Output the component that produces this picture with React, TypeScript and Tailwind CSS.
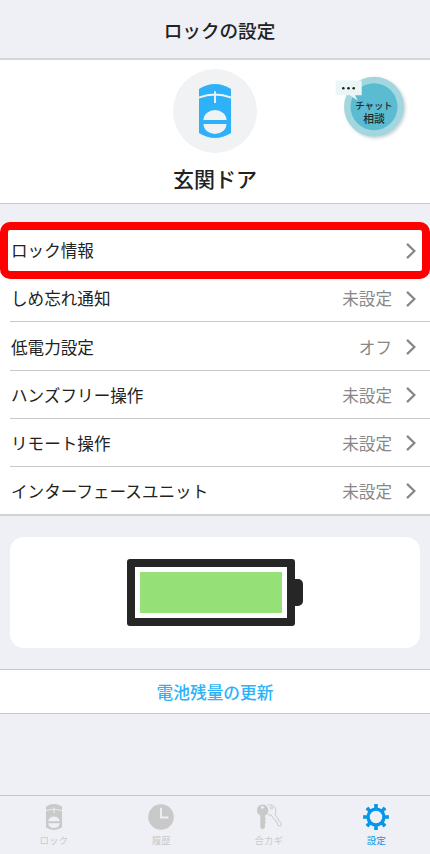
import React from 'react';

type Row = {
  label: string;
  value?: string;
};

const rows: Row[] = [
  { label: 'ロック情報' },
  { label: 'しめ忘れ通知', value: '未設定' },
  { label: '低電力設定', value: 'オフ' },
  { label: 'ハンズフリー操作', value: '未設定' },
  { label: 'リモート操作', value: '未設定' },
  { label: 'インターフェースユニット', value: '未設定' },
];

const LockIcon: React.FC<{ className: string; gap: string }> = ({ className, gap }) => (
  <svg viewBox="0 0 32 54" className={className} preserveAspectRatio="none">
    <path d="M0 5Q16 -5 32 5V49Q16 59 0 49Z" fill="currentColor" />
    <path d="M0 13.5Q16 7.5 32 13.5M16 7.2V19" fill="none" stroke={gap} strokeWidth="1.9" />
    <path d="M4.5 36A11.5 10 0 0 1 27.5 36ZM4.5 40H27.5A11.5 10 0 0 1 4.5 40Z" fill={gap} />
  </svg>
);

const ClockIcon: React.FC = () => (
  <svg viewBox="0 0 26 26" className="h-[26px] w-[26px]">
    <circle cx="13" cy="13" r="12.8" fill="currentColor" />
    <path d="M13 3.8V13.5H20.4" fill="none" stroke="#eff0f5" strokeWidth="1.9" />
  </svg>
);

const KeysIcon: React.FC = () => (
  <svg viewBox="0 0 26 26" className="h-[26px] w-[26px]">
    <g fill="none" stroke="currentColor" strokeWidth="1" strokeLinejoin="round">
      <path d="M11.5 1.3C14.5 0 18.5 1.6 19.6 5C20.2 7 19.7 8.6 18.7 9.9L25.2 19.7L24.7 22.1L22.2 21.7L21.2 20L21.5 18.5L19.8 17.9L20 16.3L18.4 15.7L15.2 11.2C13.8 11.3 12.8 10.9 12 10.3" />
      <circle cx="15.4" cy="3.9" r="1.2" />
    </g>
    <path
      fillRule="evenodd"
      d="M6.4 .4A5.9 5.9 0 0 1 9 11.6V23.5L6.6 25.6L4.3 23.8V11.6A5.9 5.9 0 0 1 6.4 .4ZM6.4 2A1.4 1.4 0 1 0 6.4 4.8A1.4 1.4 0 1 0 6.4 2Z"
      fill="currentColor"
    />
    <path d="M9 13.5L10 14.7L9 16V17.3L10 18.4L9 19.8Z" fill="currentColor" />
  </svg>
);

const GearIcon: React.FC = () => (
  <svg viewBox="0 0 26 26" className="h-[26px] w-[26px]">
    <circle cx="13" cy="13" r="7.9" fill="none" stroke="currentColor" strokeWidth="3.3" />
    {[0, 45, 90, 135, 180, 225, 270, 315].map((angle) => (
      <path
        key={angle}
        d="M9.6 4.8L11.4 3.2L11 1Q11 .1 12 .1H14Q15 .1 15 1L14.6 3.2L16.4 4.8Z"
        fill="currentColor"
        transform={`rotate(${angle} 13 13)`}
      />
    ))}
  </svg>
);

const ChatBadge: React.FC = () => (
  <button className="absolute top-[9px] left-[330px] h-[76px] w-[82px]">
    <svg viewBox="0 0 82 76" className="absolute inset-0 h-[76px] w-[82px]">
      <defs>
        <filter id="badge-shadow" x="-20%" y="-20%" width="150%" height="150%">
          <feDropShadow dx="1.5" dy="1.5" stdDeviation="1.5" floodColor="#64788a" floodOpacity="0.35" />
        </filter>
      </defs>
      <circle cx="44" cy="37.7" r="30" fill="#a4d6df" filter="url(#badge-shadow)" />
      <circle cx="44" cy="37.7" r="23.5" fill="#5bbbd0" />
      <path d="M5.7 11.5H31.7V26.3H25L27.8 31.7L20 26.3H5.7Z" fill="#eaf5f5" />
      <g fill="#222">
        <circle cx="13.3" cy="19.2" r="1.3" />
        <circle cx="18.5" cy="19.2" r="1.3" />
        <circle cx="23.7" cy="19.2" r="1.3" />
      </g>
    </svg>
    <span className="relative flex flex-col items-center pt-[8px] pl-[6px] font-medium text-[#1b2b30]">
      <span className="text-[9.4px] leading-[14px]">チャット</span>
      <span className="text-[10.8px] leading-[13px]">相談</span>
    </span>
  </button>
);

const Chevron: React.FC = () => (
  <svg viewBox="0 0 10 16" className="ml-[14px] h-4 w-[10px]">
    <path d="M1 .9L8.4 8L1 15.1" fill="none" stroke="#888" strokeWidth="2.3" />
  </svg>
);

const Battery: React.FC = () => (
  <div className="flex items-center">
    <div className="h-[67px] w-[168px] rounded-[3px] border-8 border-[#262626] bg-white p-[5px]">
      <div className="h-full w-full bg-[#96e078]" />
    </div>
    <div className="h-[27px] w-2 rounded-r-[5px] bg-[#262626]" />
  </div>
);

const tabs = [
  { label: 'ロック', icon: <LockIcon className="h-[26px] w-4" gap="#eff0f5" /> },
  { label: '履歴', icon: <ClockIcon /> },
  { label: '合カギ', icon: <KeysIcon /> },
  { label: '設定', icon: <GearIcon />, active: true },
];

const App: React.FC = () => {
  return (
    <div className="flex h-[854px] w-[430px] flex-col overflow-hidden bg-[#eff0f5] font-['Noto_Sans_CJK_JP',sans-serif] text-[#222]">
      <header className="flex h-[60px] shrink-0 items-center justify-center border-b-2 border-[#d5d5d7] pt-0.5 pl-[9px]">
        <h1 className="text-[18.6px] leading-none font-medium">ロックの設定</h1>
      </header>

      <section className="relative flex h-36 shrink-0 flex-col items-center border-b border-[#c9c9cb] bg-white pt-[9px]">
        <div className="flex h-[84px] w-[84px] items-center justify-center rounded-full bg-[#f1f2f4]">
          <LockIcon className="h-[54px] w-8 text-[#2db2fa]" gap="#f1f2f4" />
        </div>
        <h2 className="mt-[15px] text-[21px] leading-none font-medium">玄関ドア</h2>
        <ChatBadge />
      </section>

      <main className="mt-[22px] shrink-0">
        <ul className="relative border-b-2 border-[#d2d2d4] bg-white">
          {rows.map((row, index) => (
            <li key={row.label} className="pl-[10px]">
              <div
                className={`flex items-center pr-[14px] pl-px text-[16.6px] leading-none ${
                  index < rows.length - 1 ? 'h-[48.2px] border-b border-[#c8c8c8] pt-0.5' : 'h-[47px] pt-px'
                }`}
              >
                <span className="flex-1">{row.label}</span>
                {row.value && <span className="text-[#888]">{row.value}</span>}
                <Chevron />
              </div>
            </li>
          ))}
          <li className="pointer-events-none absolute -top-1 left-0 h-[57px] w-[430px] rounded-[10px] border-8 border-[#f00]" />
        </ul>

        <div className="mx-[10px] mt-[21px] flex h-[111px] items-center justify-center rounded-[14px] bg-white">
          <Battery />
        </div>

        <button className="mt-[21px] flex h-[45px] w-full items-center justify-center border-y border-[#c8c8ca] bg-white pt-px text-[16.7px] leading-none font-medium text-[#2db2fa]">
          電池残量の更新
        </button>
      </main>

      <nav className="mt-auto grid h-[59px] shrink-0 grid-cols-4 border-t border-[#c5c5c7] pt-2">
        {tabs.map((tab) => (
          <a
            key={tab.label}
            className={`flex flex-col items-center ${tab.active ? 'text-[#0797e8]' : 'text-[#c9c9ca]'}`}
          >
            {tab.icon}
            <span className="mt-[6px] text-[9.5px] leading-none">{tab.label}</span>
          </a>
        ))}
      </nav>
    </div>
  );
};

export default App;
